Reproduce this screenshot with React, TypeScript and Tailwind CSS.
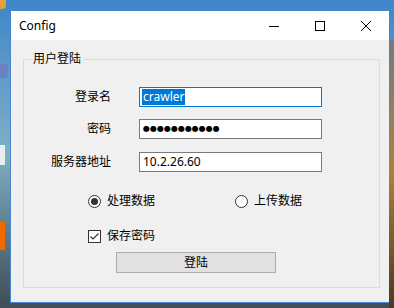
import React from 'react';

const ui = "font-['Noto_Sans','Noto_Sans_CJK_SC',sans-serif]";

function Field({ label, children, focused }: { label: string; children: React.ReactNode; focused?: boolean }) {
  return (
    <div className="flex items-center">
      <div className="w-[87px] text-right text-[12px] leading-[16px] text-black">{label}</div>
      <div
        className={`ml-[28px] flex h-[20px] w-[183px] items-center bg-white pl-[2px] text-[12px] leading-[16px] text-black border ${
          focused ? 'border-[#0078d7]' : 'border-[#7a7a7a]'
        }`}
      >
        {children}
      </div>
    </div>
  );
}

function Radio({ checked, label }: { checked?: boolean; label: string }) {
  return (
    <div className="flex items-center gap-[6px] text-[12px] leading-[16px]">
      <span className="flex h-[13px] w-[13px] items-center justify-center rounded-full border border-[#333] bg-white">
        {checked && <span className="h-[7px] w-[7px] rounded-full bg-[#333]" />}
      </span>
      <span>{label}</span>
    </div>
  );
}

export default function App() {
  return (
    <div className={`relative h-[308px] w-[394px] overflow-hidden bg-gradient-to-b from-[#3d86c9] via-[#7fb0c4] to-[#3f4d57] ${ui}`}>
      {/* desktop bits peeking around the window */}
      <div className="absolute left-0 top-0 h-[9px] w-[6px] rounded-br bg-[#e2a33a]" />
      <div className="absolute left-0 top-[64px] h-[14px] w-[8px] rounded-r bg-[#6a7fc4]" />
      <div className="absolute left-0 top-[145px] h-[20px] w-[5px] bg-[#e8eef0]" />
      <div className="absolute left-0 top-[222px] h-[28px] w-[5px] bg-[#f06a00]" />
      <div className="absolute right-0 top-[40px] h-[268px] w-[5px] bg-gradient-to-b from-[#6d7d80] via-[#a8823d] to-[#4a3a22]" />

      <div className="ml-[10px] mt-[10px] flex h-[293px] w-[380px] flex-col border border-[#4a84d4] bg-[#f0f0f0]">
        {/* title bar */}
        <div className="flex h-[29px] items-center bg-white">
          <span className="ml-[8px] text-[12px] text-black">Config</span>
          <div className="ml-auto flex h-full items-center">
            <div className="flex h-full w-[46px] items-center justify-center">
              <svg width="10" height="10" viewBox="0 0 10 10">
                <path d="M0 5.5H10" stroke="#000" strokeWidth="1" />
              </svg>
            </div>
            <div className="flex h-full w-[46px] items-center justify-center">
              <svg width="10" height="10" viewBox="0 0 10 10">
                <rect x="0.5" y="0.5" width="9" height="9" fill="none" stroke="#000" strokeWidth="1" />
              </svg>
            </div>
            <div className="flex h-full w-[46px] items-center justify-center">
              <svg width="10" height="10" viewBox="0 0 10 10">
                <path d="M0 0L10 10M10 0L0 10" stroke="#000" strokeWidth="1" />
              </svg>
            </div>
          </div>
        </div>

        {/* body */}
        <div className="pl-[12px] pr-[10px] pt-[11px]">
          <fieldset className="h-[237px] w-[357px] border border-[#dcdcdc]">
            <legend className="ml-[7px] px-[2px] text-[12px] leading-[16px] text-black">用户登陆</legend>
            <div className="mt-[20px]">
              <Field label="登录名" focused>
                <span className="bg-[#0078d7] px-[1px] text-white">crawler</span>
              </Field>
            </div>
            <div className="mt-[12px]">
              <Field label="密码">
                <span className="pl-[1px] font-['DejaVu_Sans',sans-serif] text-[8px] tracking-[0px]">●●●●●●●●●●●</span>
              </Field>
            </div>
            <div className="mt-[13px]">
              <Field label="服务器地址">
                <span className="pl-[1px]">10.2.26.60</span>
              </Field>
            </div>

            <div className="mt-[21px] flex pl-[64px]">
              <div className="w-[147px]">
                <Radio checked label="处理数据" />
              </div>
              <Radio label="上传数据" />
            </div>

            <div className="mt-[19px] flex items-center gap-[6px] pl-[64px] text-[12px] leading-[16px]">
              <span className="flex h-[13px] w-[13px] items-center justify-center border border-[#333] bg-white">
                <svg width="11" height="11" viewBox="0 0 11 11">
                  <path d="M1.5 5.5L4 8L9.5 2.5" fill="none" stroke="#333" strokeWidth="1.2" />
                </svg>
              </span>
              <span>保存密码</span>
            </div>

            <div className="mt-[8px] pl-[92px]">
              <button className="flex h-[21px] w-[160px] items-center justify-center border border-[#adadad] bg-[#e1e1e1] text-[12px] text-black">
                登陆
              </button>
            </div>
          </fieldset>
        </div>
      </div>
    </div>
  );
}
